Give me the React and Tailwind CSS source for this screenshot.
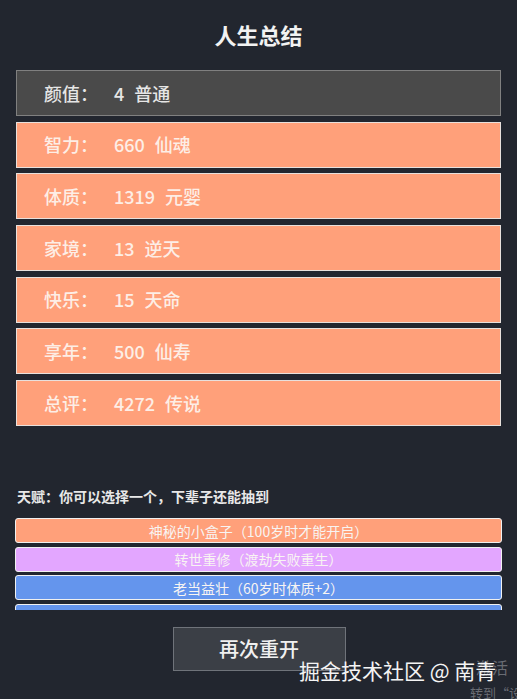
import React from 'react';

const stats = [
  { label: '颜值', value: 4, grade: '普通', tone: 'gray' },
  { label: '智力', value: 660, grade: '仙魂', tone: 'orange' },
  { label: '体质', value: 1319, grade: '元婴', tone: 'orange' },
  { label: '家境', value: 13, grade: '逆天', tone: 'orange' },
  { label: '快乐', value: 15, grade: '天命', tone: 'orange' },
  { label: '享年', value: 500, grade: '仙寿', tone: 'orange' },
  { label: '总评', value: 4272, grade: '传说', tone: 'orange' },
];

const talents = [
  { name: '神秘的小盒子（100岁时才能开启）', cls: 'bg-[#ffa07a]' },
  { name: '转世重修（渡劫失败重生）', cls: 'bg-[#e3a6ff]' },
  { name: '老当益壮（60岁时体质+2）', cls: 'bg-[#6495ed]' },
  { name: '天生神力（体质+3）', cls: 'bg-[#6495ed]' },
];

const font = { fontFamily: '"Noto Sans CJK SC", "Noto Sans", sans-serif' };

function StatRow({ label, value, grade, tone }) {
  const toneCls =
    tone === 'gray'
      ? 'bg-[#4a4a4a] border-[#808080] text-[#e6e6e6]'
      : 'bg-[#ffa07a] border-[#e8e0dc] text-[#fdeee6]';
  return (
    <div className={`h-[46px] border flex items-center pl-[27px] text-[18px] font-medium ${toneCls}`}>
      <span>{label}：</span>
      <span className="ml-[16px]">{value}</span>
      <span className="ml-[10px]">{grade}</span>
    </div>
  );
}

export default function App() {
  return (
    <div className="relative w-[517px] h-[699px] overflow-hidden bg-[#22262f] text-white" style={font}>
      <h1 className="text-center text-[22px] font-bold pt-[19px] leading-[30px] text-[#f2f2f2]">人生总结</h1>

      <div className="mt-[21px] mx-[16px] flex flex-col gap-[5.7px]">
        {stats.map((s) => (
          <StatRow key={s.label} {...s} />
        ))}
      </div>

      <p className="mt-[60px] ml-[17px] text-[14px] font-bold leading-[20px] text-[#e8e8e8]">
        天赋：你可以选择一个，下辈子还能抽到
      </p>

      <div className="mt-[12px] mx-[15px] h-[92px] overflow-hidden flex flex-col gap-[3.6px]">
        {talents.map((t) => (
          <div
            key={t.name}
            className={`shrink-0 h-[25px] rounded-[3px] border border-[#f0f0f0] flex items-center justify-center text-[14px] leading-none text-[#f8f4f2] ${t.cls}`}
          >
            {t.name}
          </div>
        ))}
      </div>

      <div className="mt-[17px] flex justify-center">
        <button className="w-[173px] h-[44px] ml-[1px] bg-[#3b3f46] border border-[#6f737a] text-[20px] leading-none font-medium text-[#f0f0f0]">
          再次重开
        </button>
      </div>

      <div className="absolute left-[476px] top-[659px] text-[16px] leading-none text-[#9a9ca2]/60 whitespace-nowrap">激活</div>
      <div className="absolute left-[470px] top-[686px] text-[13px] leading-none text-[#9a9ca2]/60 whitespace-nowrap">转到“设</div>
      <div className="absolute left-[299px] top-[655px] text-[21px] leading-[30px] text-[#f4f4f4] whitespace-nowrap">
        掘金技术社区 @ 南青
      </div>
    </div>
  );
}
